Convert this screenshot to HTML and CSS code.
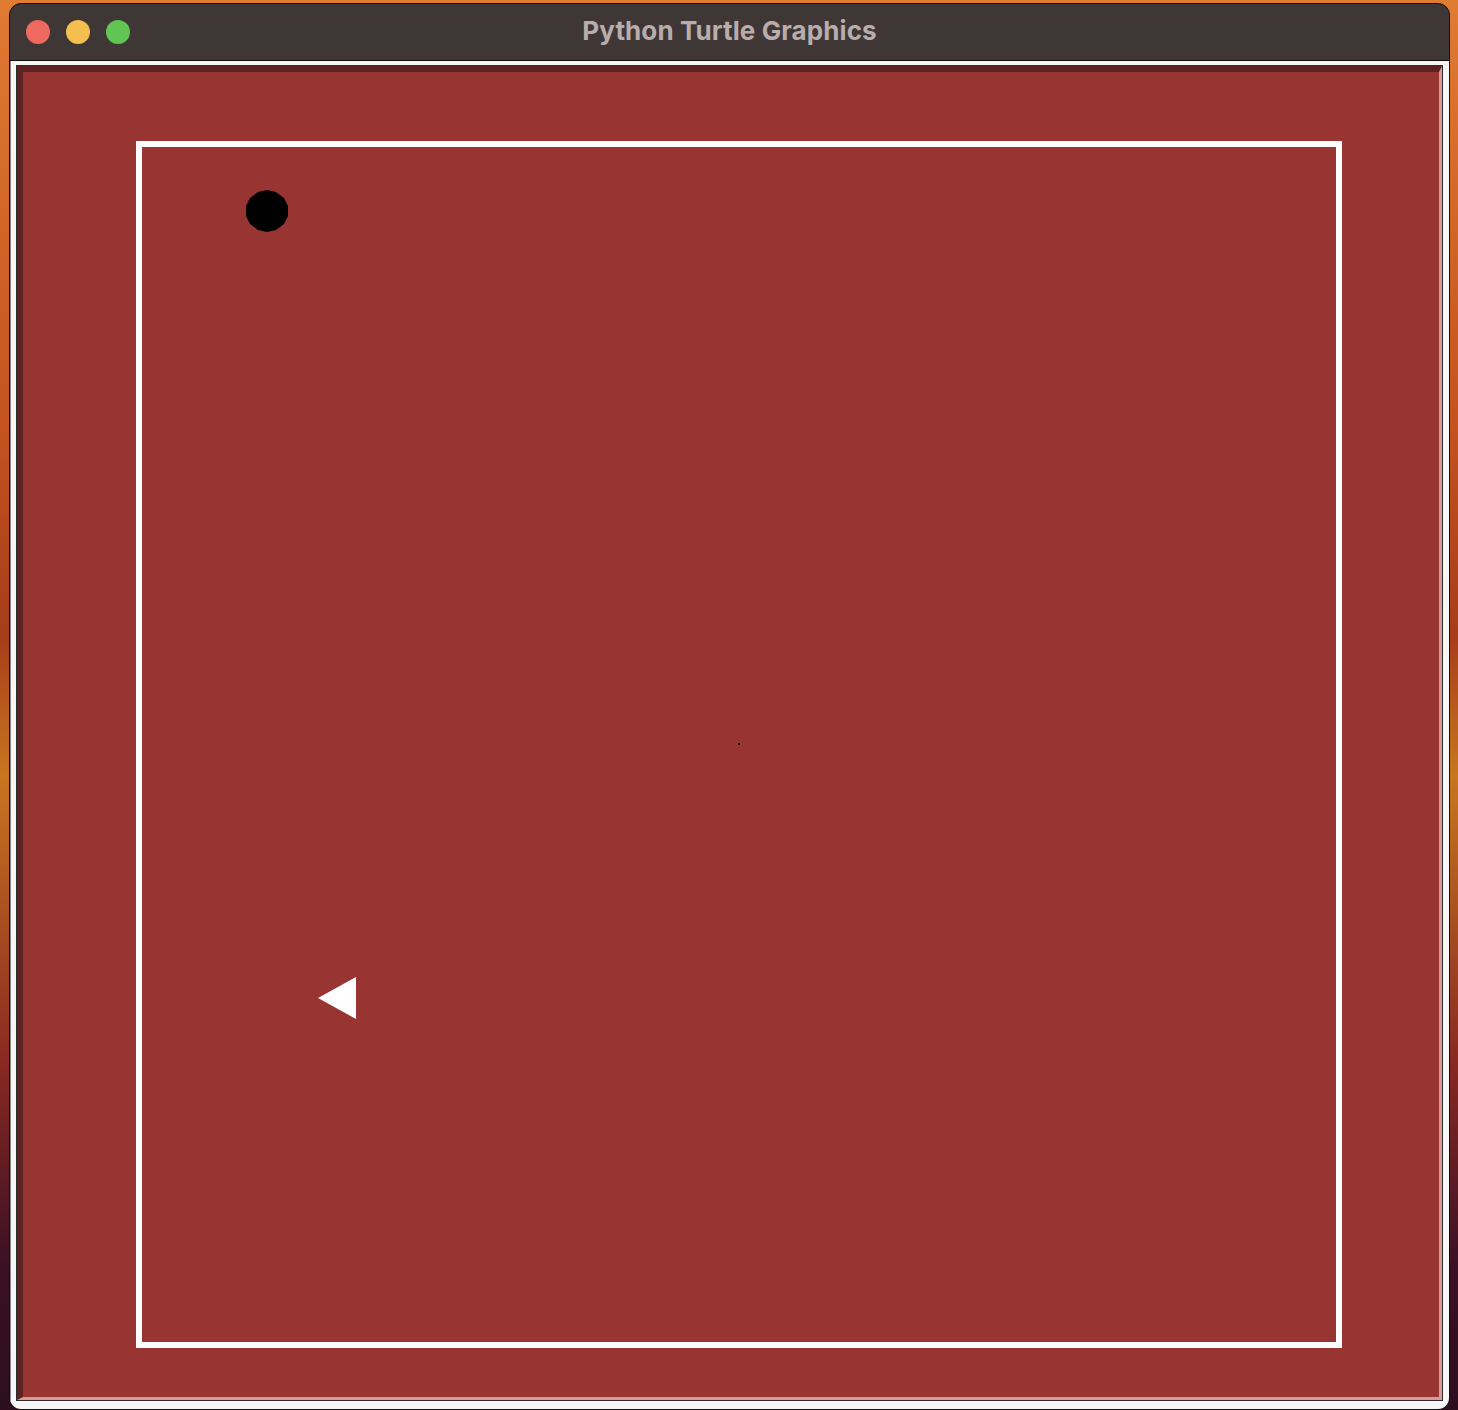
FILE: index.html
```html
<!DOCTYPE html>
<html>
<head>
<meta charset="utf-8">
<title>Python Turtle Graphics</title>
<link rel="stylesheet" href="styles.css">
</head>
<body>
<div class="window">
  <div class="titlebar">
    <div class="lights">
      <span class="light red"></span>
      <span class="light yellow"></span>
      <span class="light green"></span>
    </div>
    <div class="title">Python Turtle Graphics</div>
    <div></div>
  </div>
  <div class="content">
    <div class="frame">
      <div class="canvas">
        <svg class="drawing" width="1416" height="1325" viewBox="0 0 1416 1325">
          <rect x="116" y="72" width="1200" height="1201" fill="none" stroke="#ffffff" stroke-width="6"/>
          <polygon points="244,118 253,120 261,126 265,134 265,144 261,152 253,158 244,160 235,158 227,152 223,144 223,134 227,126 235,120" fill="#000"/>
          <polygon points="295,926 333,905 333,947" fill="#fff"/>
          <rect x="715" y="671" width="2" height="2" fill="#1a0505"/>
        </svg>
      </div>
    </div>
  </div>
</div>
</body>
</html>
```

FILE: styles.css
```css
html, body {
  margin: 0;
  padding: 0;
}
body {
  width: 1458px;
  height: 1410px;
  overflow: hidden;
  background: linear-gradient(180deg, #e07b32 0%, #c4531e 30%, #a63c1a 45%, #c8761f 55%, #8a2a22 75%, #3a1024 90%, #2c0e1f 100%);
}
.window {
  box-sizing: border-box;
  margin: 3px 0 0 9px;
  width: 1441px;
  height: 1407px;
  border: 1px solid #111;
  border-radius: 12px;
  background: #3e3736;
  overflow: hidden;
  display: flex;
  flex-direction: column;
}
.titlebar {
  height: 56px;
  border-bottom: 1px solid #111;
  display: grid;
  grid-template-columns: 1fr auto 1fr;
  align-items: center;
  flex: none;
}
.lights {
  display: flex;
  gap: 16px;
  padding-left: 16px;
  margin-top: -1px;
}
.light {
  width: 24px;
  height: 24px;
  border-radius: 50%;
  display: block;
}
.red { background: #ee6a5f; }
.yellow { background: #f5bf4f; }
.green { background: #61c554; }
.title {
  font-family: Inter, "Open Sans", sans-serif;
  font-weight: 700;
  font-size: 26px;
  color: #b8adab;
  letter-spacing: 0.1px;
  margin-top: -3px;
}
.content {
  flex: 1;
  background: #f6f6f6;
  padding: 4px 7px 6px 5px;
  border-left: 2px solid #8a8a8a;
  margin-left: -1px;
}
.frame {
  border: 1px solid #2c2c2c;
  width: 1425px;
}
.canvas {
  width: 1416px;
  height: 1325px;
  background: #983431;
  border-top: 6px solid #5c2120;
  border-left: 6px solid #5c2120;
  border-right: 3px solid #d89a98;
  border-bottom: 3px solid #d89a98;
}
.drawing {
  display: block;
}
```
